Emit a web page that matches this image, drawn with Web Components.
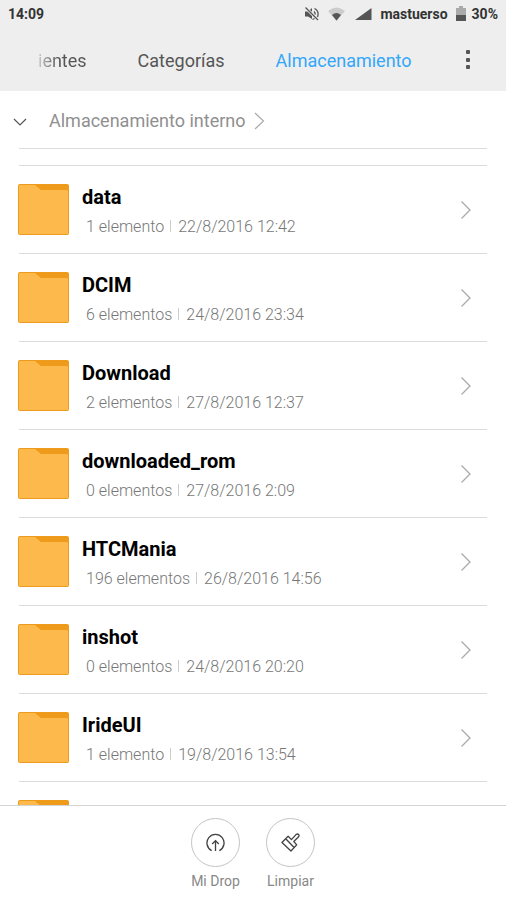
<!DOCTYPE html>
<html lang="es">
<head>
<meta charset="utf-8">
<meta name="viewport" content="width=device-width, initial-scale=1">
<title>Almacenamiento</title>
<style>
html, body { height: 100%; margin: 0; }
body { font-family: Roboto, "Noto Sans", sans-serif; background: #fff; overflow: hidden; }
</style>
</head>
<body>
<file-explorer></file-explorer>
<script>
const define = (name, html, init) => customElements.define(name, class extends HTMLElement {
  connectedCallback() {
    if (this.shadowRoot) return;
    const root = this.attachShadow({ mode: 'open' });
    const t = document.createElement('template');
    t.innerHTML = html;
    root.append(t.content.cloneNode(true));
    if (init) init(this, root);
  }
});

define('status-bar', `
<style>
:host { display: flex; align-items: center; height: 28px; padding: 0 8px; font-size: 14px; line-height: 20px; font-weight: 700; color: #333; }
.right { margin-left: auto; display: flex; align-items: center; }
svg { display: block; }
.mute { margin-right: 8px; } .wifi { margin-right: 10px; } .signal { margin-right: 8px; }
.battery { margin: 0 5px 0 7px; }
</style>
<span>14:09</span>
<div class="right">
<svg class="mute" width="16" height="16" viewBox="0 0 16 16" fill="none" stroke="#555" stroke-width="1.3"><path d="M1 5.5H4L8 2V13L4 10.5H1Z" fill="#555" stroke="none"/><path d="M1.500 1.500L14 14" stroke="#eee" stroke-width="3"/><path d="M1.500 1.500L14 14M10 5.500Q11.500 7 11 8.500M10.500 2.500Q15.500 5 13.500 11M8.500 13.500L10.500 12.500"/></svg>
<svg class="wifi" width="17" height="14" viewBox="0 0 17 14"><path d="M0 4Q8.500-3 17 4L8.500 14Z" fill="#ccc"/><path d="M4 8Q8.500 4 13 8L8.500 13.500Z" fill="#555"/></svg>
<svg class="signal" width="17" height="12" viewBox="0 0 17 12"><path d="M0 12L16.500 0V12Z" fill="#555"/></svg>
<span>mastuerso</span>
<svg class="battery" width="12" height="16" viewBox="0 0 12 16"><path d="M4 0H8V2H11V9H1V2H4Z" fill="#aaa"/><path d="M1 9H11V15H1Z" fill="#555"/></svg>
<span>30%</span>
</div>`);

define('tab-strip', `
<style>
:host { display: flex; align-items: center; height: 63px; padding: 0 26px 0 38px; }
nav { flex: 1; min-width: 0; display: flex; gap: 51px; padding-top: 2px; }
::slotted(a) { text-decoration: none; color: #555; font-size: 18px; line-height: 24px; white-space: nowrap; }
::slotted(a[aria-current]) { color: #33a7fa; }
::slotted(a:first-child) { background: linear-gradient(90deg, #ccc, #555 20px); -webkit-background-clip: text; background-clip: text; color: transparent; }
button { border: 0; background: none; padding: 0 8px; display: block; }
svg { display: block; }
</style>
<nav><slot></slot></nav>
<button aria-label="Más opciones"><svg width="8" height="24" viewBox="0 0 8 24" fill="#555"><rect x="2" y="2" width="4" height="4" rx="1"/><rect x="2" y="10" width="4" height="4" rx="1"/><rect x="2" y="17" width="4" height="4" rx="1"/></svg></button>`);

define('path-bar', `
<style>
:host { display: flex; align-items: center; height: 57px; margin: 0 19px; border-bottom: 1px solid #dcdcdc; }
button { border: 0; background: none; padding: 0; margin: 4px 22px 0 -6px; }
svg { display: block; }
a { display: flex; align-items: center; gap: 8px; color: #909090; font-size: 18px; line-height: 24px; text-decoration: none; padding-top: 2px; white-space: nowrap; }
</style>
<button aria-label="Desplegar"><svg width="14" height="10" viewBox="0 0 14 10" fill="none" stroke="#555" stroke-width="1.2"><path d="M1 2L7 8L13 2"/></svg></button>
<a href="#"><slot></slot><svg width="11" height="18" viewBox="0 0 11 18" fill="none" stroke="#aaa" stroke-width="1.2"><path d="M1 1L9.500 9L1 17"/></svg></a>`);

define('folder-row', `
<style>
:host { display: block; margin: 0 19px; border-top: 1px solid #dcdcdc; }
a { display: flex; align-items: center; height: 87px; box-sizing: border-box; color: #000; text-decoration: none; margin-left: -1px; padding-right: 15px; }
svg { display: block; flex: none; }
.text { flex: 1; min-width: 0; padding: 3px 0 0 13px; }
.name { font-size: 20px; line-height: 24px; font-weight: 700; margin-bottom: 8px; }
.meta { display: flex; align-items: center; font-size: 16px; line-height: 20px; min-height: 20px; font-weight: 300; color: #777; padding-left: 4px; white-space: nowrap; }
i { width: 1px; height: 12px; background: #ccc; margin: 0 7px 2px 6px; }
</style>
<a href="#">
<svg width="51" height="51" viewBox="0 0 51 51"><rect width="51" height="51" rx="2" fill="#ee9a1a"/><path d="M1 2Q1 1 2 1H17L23 6H48Q50 6 50 7V49Q50 50 49 50H2Q1 50 1 49Z" fill="#fdb94b"/></svg>
<div class="text"><div class="name"><slot></slot></div><div class="meta"><span class="count"></span><i></i><span class="date"></span></div></div>
<svg width="12" height="20" viewBox="0 0 12 20" fill="none" stroke="#aaa" stroke-width="1.3"><path d="M1.500 1.500L10 10L1.500 18.500"/></svg>
</a>`, (host, root) => {
  root.querySelector('.count').textContent = host.getAttribute('count');
  root.querySelector('.date').textContent = host.getAttribute('date');
});

define('action-button', `
<style>
:host { display: block; }
button { border: 0; background: none; padding: 0; font: inherit; font-size: 14px; line-height: 18px; color: #888; display: flex; flex-direction: column; align-items: center; gap: 5px; min-width: 49px; }
.ring { width: 47px; height: 47px; border: 1px solid #c4c4c4; border-radius: 50%; display: grid; place-items: center; }
</style>
<button><span class="ring"><slot name="icon"></slot></span><slot></slot></button>`);

define('file-explorer', `
<style>
:host { display: flex; flex-direction: column; height: 100vh; }
header { background: #eee; flex: none; }
main { flex: 1; min-height: 0; overflow: hidden; }
.list { padding-top: 16px; }
footer { flex: none; border-top: 1px solid #d4d4d4; padding: 12px 0 10px; display: flex; justify-content: center; gap: 26px; background: #fff; }
svg { display: block; }
</style>
<header><status-bar></status-bar><tab-strip><a href="#">ientes</a><a href="#">Categorías</a><a href="#" aria-current="page">Almacenamiento</a></tab-strip></header>
<main>
<path-bar>Almacenamiento interno</path-bar>
<div class="list">
<folder-row count="1 elemento" date="22/8/2016 12:42">data</folder-row>
<folder-row count="6 elementos" date="24/8/2016 23:34">DCIM</folder-row>
<folder-row count="2 elementos" date="27/8/2016 12:37">Download</folder-row>
<folder-row count="0 elementos" date="27/8/2016 2:09">downloaded_rom</folder-row>
<folder-row count="196 elementos" date="26/8/2016 14:56">HTCMania</folder-row>
<folder-row count="0 elementos" date="24/8/2016 20:20">inshot</folder-row>
<folder-row count="1 elemento" date="19/8/2016 13:54">IrideUI</folder-row>
<folder-row count="" date="">Movies</folder-row>
</div>
</main>
<footer>
<action-button><svg slot="icon" width="19" height="19" viewBox="0 0 20 20" fill="none" stroke="#444" stroke-width="1.4"><path d="M6 18.500A9 9 0 1 1 14 18.500M10 19V8M6.500 11.500L10 8L13.500 11.500"/></svg>Mi Drop</action-button>
<action-button><svg slot="icon" width="19" height="19" viewBox="0 0 20 20" fill="none" stroke="#444" stroke-width="1.4" stroke-linejoin="round"><path d="M1 10L7.500 3.500L11 7L16 1.500Q17.500 .5 18.500 1.500Q19.500 2.500 18.500 4L13.500 9L16.500 12.500L10.500 19ZM5 6L14 15.500"/></svg>Limpiar</action-button>
</footer>`);
</script>
</body>
</html>
